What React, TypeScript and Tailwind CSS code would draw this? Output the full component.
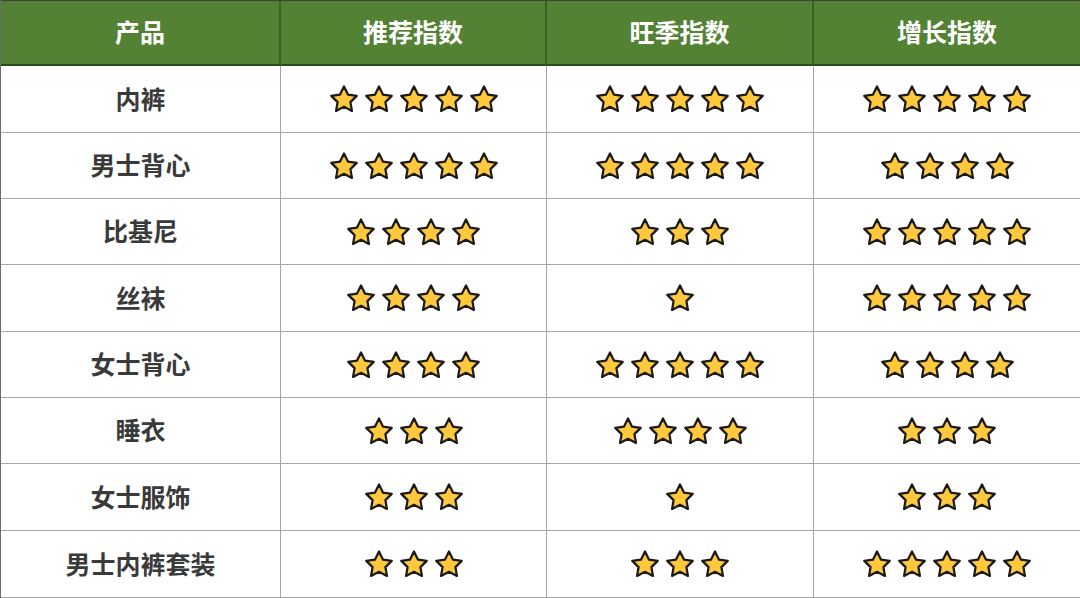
import React from "react";

const rows: [string, number, number, number][] = [
  ["内裤", 5, 5, 5],
  ["男士背心", 5, 5, 4],
  ["比基尼", 4, 3, 5],
  ["丝袜", 4, 1, 5],
  ["女士背心", 4, 5, 4],
  ["睡衣", 3, 4, 3],
  ["女士服饰", 3, 1, 3],
  ["男士内裤套装", 3, 3, 5],
];

const headers = ["产品", "推荐指数", "旺季指数", "增长指数"];

function Star() {
  return (
    <svg width="30" height="30" viewBox="0 0 28 28">
      <path
        d="M14 2.3 L17.7 9.9 L25.9 11.1 L20 16.9 L21.4 25.1 L14 21.3 L6.6 25.1 L8 16.9 L2.1 11.1 L10.3 9.9 Z"
        fill="#ffc83d"
        stroke="#1a1a1a"
        strokeWidth="2.1"
        strokeLinejoin="round"
      />
    </svg>
  );
}

function Stars({ n }: { n: number }) {
  return (
    <div className="flex items-center justify-center gap-[5px]">
      {Array.from({ length: n }).map((_, i) => (
        <Star key={i} />
      ))}
    </div>
  );
}

export default function App() {
  return (
    <div
      className="w-[1080px] h-[598px] bg-white grid grid-cols-[280px_266px_267px_267px] grid-rows-[66px_67px_66px_66px_67px_66px_66px_67px_67px] border-l border-l-[#6b6b6b] overflow-hidden"
      style={{ fontFamily: '"Noto Sans CJK SC", "Noto Sans", sans-serif' }}
    >
      {headers.map((h, i) => (
        <div
          key={h}
          className={`bg-[#548235] text-white font-bold text-[25px] leading-none pb-[2px] flex items-center justify-center border-b-2 border-b-[#2e4a1d] border-t border-t-[#3f3f3f] ${
            i < 3 ? "border-r-2 border-r-[#3b5f25]" : "border-r border-r-[#3b5f25]"
          }`}
        >
          {h}
        </div>
      ))}
      {rows.map(([name, a, b, c]) => (
        <React.Fragment key={name}>
          <div className="flex items-center justify-center border-r border-b border-[#a6a6a6] text-[25px] leading-none pb-[2px] font-bold text-[#3a3a3a]">
            {name}
          </div>
          <div className="flex items-center justify-center border-r border-b border-[#a6a6a6]">
            <Stars n={a} />
          </div>
          <div className="flex items-center justify-center border-r border-b border-[#a6a6a6]">
            <Stars n={b} />
          </div>
          <div className="flex items-center justify-center border-r border-b border-[#a6a6a6]">
            <Stars n={c} />
          </div>
        </React.Fragment>
      ))}
    </div>
  );
}
